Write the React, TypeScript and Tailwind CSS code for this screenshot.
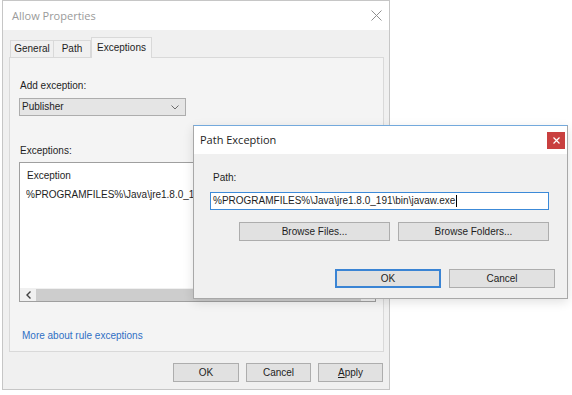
import React from "react";

const ui = "font-['Liberation_Sans',Arial,sans-serif] text-[10px] leading-[12px] text-[#1e1e1e]";
const title = "font-['Open_Sans','Noto_Sans',sans-serif] text-[11px]";

function Btn({ children, w, def }: { children: React.ReactNode; w: string; def?: boolean }) {
  return (
    <div
      className={`${w} h-[19px] flex items-center justify-center bg-[#e1e1e1] border ${
        def ? "border-[#3a84d4] shadow-[inset_0_0_0_1px_#3a84d4]" : "border-[#adadad]"
      }`}
    >
      {children}
    </div>
  );
}

function Chevron({ dir }: { dir: "down" | "left" }) {
  return dir === "down" ? (
    <svg width="8" height="5" viewBox="0 0 8 5">
      <path d="M0.5 0.5 L4 4 L7.5 0.5" fill="none" stroke="#6b6b6b" strokeWidth="1" />
    </svg>
  ) : (
    <svg width="5" height="8" viewBox="0 0 5 8">
      <path d="M4.5 0.5 L1 4 L4.5 7.5" fill="none" stroke="#404040" strokeWidth="1.4" />
    </svg>
  );
}

export default function App() {
  return (
    <div className={`relative w-[572px] h-[395px] bg-white overflow-hidden ${ui}`}>
      {/* Allow Properties window */}
      <div className="absolute left-[2px] top-0 w-[388px] h-[390px] border border-[#c6c6c6] bg-[#f0f0f0] flex flex-col">
        <div className="h-[29px] bg-white flex items-center justify-between pl-[9px] pr-[7px]">
          <span className={`${title} text-[#9a9a9a]`}>Allow Properties</span>
          <svg width="11" height="11" viewBox="0 0 11 11">
            <path d="M0.5 0.5 L10.5 10.5 M10.5 0.5 L0.5 10.5" stroke="#8f8f8f" strokeWidth="1" />
          </svg>
        </div>

        <div className="flex-1 flex flex-col pl-[6px] pr-[5px] pt-[6px]">
          {/* tabs */}
          <div className="flex items-end h-[21px] pl-[1px]">
            <div className="w-[44px] h-[17px] border border-b-0 border-[#d9d9d9] bg-[#f0f0f0] flex items-center justify-center">
              General
            </div>
            <div className="w-[37px] h-[17px] border border-b-0 border-l-0 border-[#d9d9d9] bg-[#f0f0f0] flex items-center justify-center">
              Path
            </div>
            <div className="w-[61px] h-[21px] border border-b-0 border-[#d9d9d9] bg-[#f4f4f4] flex items-center justify-center relative top-[1px] z-10">
              Exceptions
            </div>
          </div>

          {/* tab page */}
          <div className="h-[295px] border border-[#d9d9d9] bg-[#f4f4f4] flex flex-col pl-[9px] pr-[7px]">
            <div className="mt-[22px] pl-[1px]">Add exception:</div>
            <div className="mt-[6px] w-[167px] h-[18px] bg-[#e5e5e5] border border-[#adadad] flex items-center justify-between pl-[2px] pr-[6px]">
              <span>Publisher</span>
              <Chevron dir="down" />
            </div>

            <div className="mt-[29px] pl-[1px]">Exceptions:</div>
            <div className="mt-[5px] h-[140px] bg-white border border-[#9f9f9f] flex flex-col overflow-hidden">
              <div className="pl-[7px] pt-[7px]">Exception</div>
              <div className="ml-[6px] mt-[7px] w-[167px] overflow-hidden whitespace-nowrap">
                %PROGRAMFILES%\Java\jre1.8.0_191\bin\javaw.exe
              </div>
              <div className="mt-auto h-[13px] bg-[#f0f0f0] flex items-center">
                <div className="w-[16px] flex items-center justify-center">
                  <Chevron dir="left" />
                </div>
                <div className="flex-1 h-[12px] bg-[#cdcdcd] mr-[14px]" />
              </div>
            </div>

            <div className="mt-[28px] pl-[3px] text-[#2f6fc4]">More about rule exceptions</div>
          </div>

          {/* dialog buttons */}
          <div className="mt-[11px] flex justify-end gap-[7px] pr-[1px]">
            <Btn w="w-[66px]">OK</Btn>
            <Btn w="w-[65px]">Cancel</Btn>
            <Btn w="w-[65px]">
              <span>
                <span className="underline">A</span>pply
              </span>
            </Btn>
          </div>
        </div>
      </div>

      {/* Path Exception window */}
      <div className="absolute left-[193px] top-[125px] w-[375px] h-[174px] border border-[#a8a8a8] border-t-[#73a9dc] bg-[#f0f0f0] flex flex-col shadow-[0_3px_10px_rgba(0,0,0,0.12)] z-20">
        <div className="h-[28px] bg-white flex items-center justify-between pl-[6px] pr-[2px]">
          <span className={`${title} text-[#1e1e1e]`}>Path Exception</span>
          <div className="w-[18px] h-[17px] bg-[#c9403f] flex items-center justify-center">
            <svg width="7" height="7" viewBox="0 0 7 7">
              <path d="M0.5 0.5 L6.5 6.5 M6.5 0.5 L0.5 6.5" stroke="#fff" strokeWidth="1.2" />
            </svg>
          </div>
        </div>

        <div className="flex-1 flex flex-col pl-[16px] pt-[18px]">
          <div className="pl-[3px]">Path:</div>
          <div className="mt-[8px] w-[339px] h-[18px] bg-white border border-[#3c8ad8] flex items-center pl-[2px] whitespace-nowrap">
            %PROGRAMFILES%\Java\jre1.8.0_191\bin\javaw.exe
            <span className="inline-block w-px h-[12px] bg-black ml-px" />
          </div>
          <div className="mt-[12px] flex gap-[8px] pl-[29px]">
            <Btn w="w-[151px]">Browse Files...</Btn>
            <Btn w="w-[151px]">Browse Folders...</Btn>
          </div>
          <div className="mt-[28px] flex gap-[8px] pl-[125px]">
            <Btn w="w-[106px]" def>
              OK
            </Btn>
            <Btn w="w-[106px]">Cancel</Btn>
          </div>
        </div>
      </div>
    </div>
  );
}
